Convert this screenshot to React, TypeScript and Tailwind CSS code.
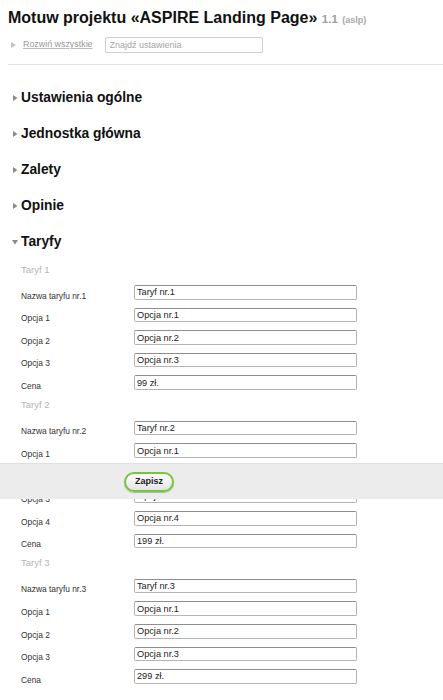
import React from "react";

type Field = { label: string; value: string };

const TARIFFS: { title: string; fields: Field[] }[] = [
  {
    title: "Taryf 1",
    fields: [
      { label: "Nazwa taryfu nr.1", value: "Taryf nr.1" },
      { label: "Opcja 1", value: "Opcja nr.1" },
      { label: "Opcja 2", value: "Opcja nr.2" },
      { label: "Opcja 3", value: "Opcja nr.3" },
      { label: "Cena", value: "99 zł." },
    ],
  },
  {
    title: "Taryf 2",
    fields: [
      { label: "Nazwa taryfu nr.2", value: "Taryf nr.2" },
      { label: "Opcja 1", value: "Opcja nr.1" },
      { label: "Opcja 2", value: "Opcja nr.2" },
      { label: "Opcja 3", value: "Opcja nr.3" },
      { label: "Opcja 4", value: "Opcja nr.4" },
      { label: "Cena", value: "199 zł." },
    ],
  },
  {
    title: "Taryf 3",
    fields: [
      { label: "Nazwa taryfu nr.3", value: "Taryf nr.3" },
      { label: "Opcja 1", value: "Opcja nr.1" },
      { label: "Opcja 2", value: "Opcja nr.2" },
      { label: "Opcja 3", value: "Opcja nr.3" },
      { label: "Cena", value: "299 zł." },
    ],
  },
];

const COLLAPSED = ["Ustawienia ogólne", "Jednostka główna", "Zalety", "Opinie"];

function Arrow({ open = false }: { open?: boolean }) {
  return (
    <svg width="6" height="6" viewBox="0 0 6 6" className="shrink-0">
      {open ? (
        <polygon points="0,1 6,1 3,5.5" fill="#8a8a8a" />
      ) : (
        <polygon points="1,0 5.5,3 1,6" fill="#8a8a8a" />
      )}
    </svg>
  );
}

function SectionHeading({ title, open }: { title: string; open?: boolean }) {
  return (
    <div className="flex h-[36px] items-center gap-[3px] pl-[4px]">
      <Arrow open={open} />
      <h3 className="text-[13.8px] font-bold text-[#111]">{title}</h3>
    </div>
  );
}

function FieldRow({ field }: { field: Field }) {
  return (
    <div className="flex h-[22.6px] items-start">
      <label className="w-[126px] pt-[4.5px] pl-[13px] text-[8.4px] text-[#333]">
        {field.label}
      </label>
      <input
        type="text"
        readOnly
        defaultValue={field.value}
        className="h-[14.5px] w-[223px] rounded-[2px] border border-[#b4b4b4] border-t-[#8e8e8e] bg-white px-[2px] text-[9.2px] leading-none text-[#222] outline-none"
      />
    </div>
  );
}

export default function App() {
  return (
    <div
      className="relative min-h-[700px] bg-white pl-[8px]"
      style={{ fontFamily: '"Liberation Sans", Arial, sans-serif' }}
    >
      {/* Header */}
      <h1 className="pt-[6px] text-[16px] font-bold leading-[24px] text-[#111]">
        Motuw projektu «ASPIRE Landing Page»{" "}
        <span className="text-[11.5px] text-[#a0a0a0]">1.1</span>{" "}
        <span className="text-[9px] text-[#a8a8a8]">(aslp)</span>
      </h1>

      <div className="mt-[5px] flex h-[16px] items-center">
        <span className="pl-[3px]">
          <svg width="5" height="6" viewBox="0 0 5 6">
            <polygon points="0,0 5,3 0,6" fill="#c4c4c4" />
          </svg>
        </span>
        <a className="ml-[7px] text-[8.9px] text-[#999] underline decoration-[#bbb]">
          Rozwiń wszystkie
        </a>
        <input
          type="text"
          placeholder="Znajdź ustawienia"
          className="ml-[12px] h-[16px] w-[158px] rounded-[2px] border border-[#cfcfcf] px-[4px] text-[9px] text-[#333] outline-none placeholder:text-[#a5a5a5]"
        />
      </div>

      <hr className="mt-[11px] border-t border-[#e4e4e4]" />

      {/* Sections */}
      <div className="mt-[15px]">
        {COLLAPSED.map((t) => (
          <SectionHeading key={t} title={t} />
        ))}
        <SectionHeading title="Taryfy" open />
      </div>

      <div className="mt-[2.5px]">
        {TARIFFS.map((tariff) => (
          <div key={tariff.title}>
            <div className="flex h-[22.6px] items-start pl-[13px] text-[9.5px] text-[#b5b5b5]">
              {tariff.title}
            </div>
            {tariff.fields.map((f, i) => (
              <FieldRow key={i} field={f} />
            ))}
          </div>
        ))}
      </div>

      {/* Save bar overlay */}
      <div className="absolute left-0 right-0 top-[463px] flex h-[36px] items-center border-t border-[#e0e0e0] bg-[#ececec] pl-[124px]">
        <button
          type="button"
          className="h-[20px] w-[50px] rounded-full border-2 border-[#73c83f] bg-gradient-to-b from-white to-[#e4e4e4] text-[9px] font-bold text-[#222] shadow-[0_1px_1px_rgba(0,0,0,0.25)]"
        >
          Zapisz
        </button>
      </div>
    </div>
  );
}
